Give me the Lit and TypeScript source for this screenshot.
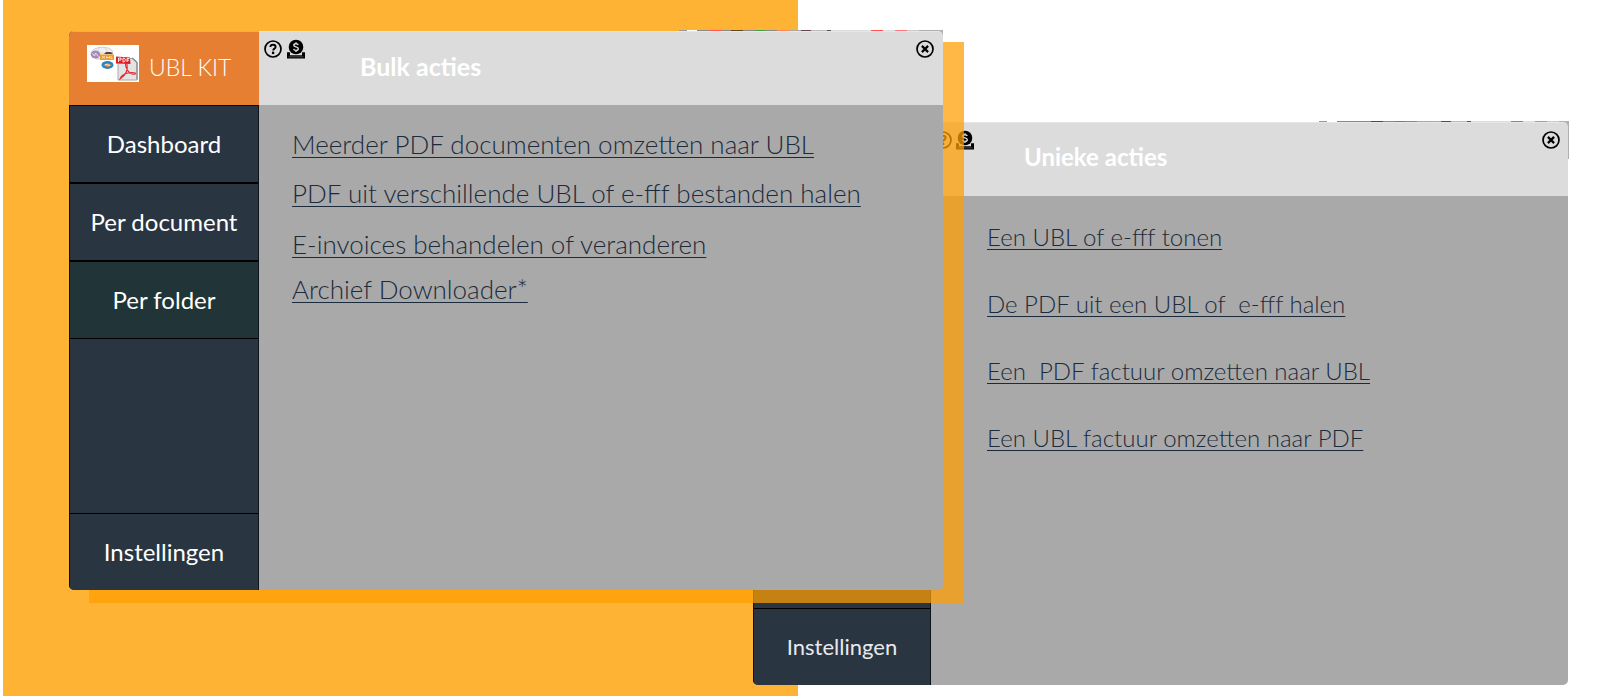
import { LitElement, html, css, svg, nothing } from 'lit';
import { customElement, property } from 'lit/decorators.js';
import { classMap } from 'lit/directives/class-map.js';

const helpIcon = svg`<svg viewBox="0 0 18 18" aria-hidden="true">
  <circle cx="9" cy="9" r="8" fill="none" stroke="#000" stroke-width="1.7" />
  <path d="M6.4 7.1C6.4 5.5 7.5 4.7 9 4.7s2.6.8 2.6 2.2c0 1.8-2.4 1.7-2.4 3.5" fill="none" stroke="#000" stroke-width="1.9" />
  <circle cx="9.1" cy="12.9" r="1.3" />
</svg>`;

const coinIcon = svg`<svg viewBox="0 0 18 18" aria-hidden="true">
  <path d="M0 12.3h3v3h12v-3h3V18.4H0z" />
  <path d="M1.6 16.8h14.8" stroke="#777" stroke-width=".6" />
  <circle cx="9" cy="7" r="7.3" />
  <path d="M11.3 4.9C10.9 4 10 3.7 9 3.7c-1.3 0-2.2.6-2.2 1.6 0 2.2 4.5 1 4.5 3.4 0 1-1 1.7-2.3 1.7-1.2 0-2.1-.5-2.4-1.500M9 2.200v1.500M9 10.400v1.600" fill="none" stroke="#dcdcdc" stroke-width="1.4" />
</svg>`;

const closeIcon = svg`<svg viewBox="0 0 18 18" aria-hidden="true">
  <circle cx="9" cy="9" r="8" fill="none" stroke="#000" stroke-width="1.7" />
  <path d="M5.9 5.9l6.2 6.2M12.1 5.9l-6.2 6.2" stroke="#000" stroke-width="2.2" />
</svg>`;

const logo = svg`<svg class="logo" viewBox="0 0 52 37" preserveAspectRatio="none" role="img" aria-label="UBL Kit">
  <rect width="52" height="37" fill="#fff" />
  <path d="M4 8c2-7 19-8 22-1l-4 7H9z" fill="#f0eff3" stroke="#c4c2cb" stroke-width=".8" />
  <path d="M9 6l13 4M12 3l-3 8M18 3l4 6" stroke="#d5d3da" stroke-width=".8" />
  <ellipse cx="8.5" cy="9.5" rx="4.8" ry="4" fill="#a58bb5" />
  <path d="M5.5 8.5l2 2.5 1-3 3 3.5" fill="none" stroke="#eee3f3" />
  <path d="M17 9l2-2h5l2 2z" fill="#5a4632" />
  <rect x="13" y="9.5" width="14" height="5.5" fill="#f39a1f" />
  <path d="M15 11l3 2.5M18 11l-3 2.5M19.5 13.5v-2l1.5 1.5 1.5-1.5v2M24 11v2.5h1.5" fill="none" stroke="#fbe6bd" stroke-width=".9" />
  <ellipse cx="20.5" cy="20" rx="6" ry="3.9" fill="#2585c9" />
  <path d="M16 20.5l4-2.5 5 2-4 2z" fill="#ef8b32" />
  <path d="M18 19.5l5 .8" stroke="#fff" stroke-width=".8" />
  <path d="M31 13.5h15l4 3.5v18H31z" fill="#e3e3e3" stroke="#aaa" />
  <path d="M45 13l5 4.5v17" fill="none" stroke="#8b8b8b" stroke-width="1.3" />
  <path d="M33 34c6-4 8-10 7-15-1-2-2 0-1 3 2 6 6 8 9 7 2-1-2-2-7-1s-7 3-8 6z" fill="none" stroke="#e02b32" stroke-width="1.1" />
  <path d="M29 11.5l14 1 .5 6.5-14.5-.5z" fill="#df1f26" />
  <path d="M31.5 17v-4h2.5v2h-2M36 13v4c3 0 3-4 0-4M40 17v-3.5h2.5M40 15.2h2" fill="none" stroke="#fff" stroke-width=".9" />
</svg>`;

@customElement('kit-window')
class KitWindow extends LitElement {
  @property() heading = '';
  @property({ attribute: false }) links: string[] = [];
  @property({ attribute: false }) items: string[] = [];
  @property() current = '';
  @property({ type: Boolean }) secondary = false;

  static styles = css`
    :host {
      display: block;
      min-width: 0;
      font-family: Lato, 'Open Sans', sans-serif;
    }
    .window {
      position: relative;
      box-sizing: border-box;
      height: 100%;
      display: grid;
      grid-template-columns: 190px minmax(0, 1fr);
      background: #a9a9a9;
      border-radius: 5px;
    }
    .secondary {
      grid-template-columns: 178px minmax(0, 1fr);
    }
    .frame {
      position: relative;
      z-index: 0;
      height: 100%;
    }
    /* busy desktop edge peeking out behind the window */
    .fringe {
      position: absolute;
      top: -1px;
      right: 0;
      width: 264px;
      height: 8px;
      z-index: -1;
      background: linear-gradient(90deg, #999 0 8px, #fff 8px 18px, #888 18px 30px, #f55 30px 42px, #888 42px 52px,
        #5f4a20 52px 64px, #888 64px 76px, #3fa34d 76px 86px, #888 86px 98px, #f85 98px 110px, #aaa 110px 122px,
        #645 122px 132px, #bbb 132px 148px, #555 148px 152px, #ddd 152px 192px, #f55 192px 204px, #ddd 204px 216px,
        #f77 216px 228px, #ccc 228px 240px, #b0b0b0 240px);
    }
    .fringe.wide {
      right: -1px;
      width: 250px;
      height: 38px;
    }
    .side {
      display: flex;
      flex-direction: column;
      overflow: hidden;
      border-radius: 5px 0 0 5px;
      background: #2a3542;
    }
    .brand {
      box-sizing: border-box;
      height: 74px;
      display: flex;
      align-items: center;
      gap: 10px;
      padding: 0 0 10px 18px;
      border-top: 1px solid #eda86f;
      background: #e67f32;
      color: #fff;
      font-size: 23px;
      line-height: 32px;
      font-weight: 300;
      white-space: nowrap;
    }
    .brand span {
      padding-top: 6px;
    }
    .logo {
      width: 52px;
      height: 37px;
    }
    nav {
      flex: 1;
      display: flex;
      flex-direction: column;
      border-left: 1px solid #0d1218;
      border-right: 1px solid #0d1218;
    }
    button {
      font-family: inherit;
      cursor: pointer;
    }
    .item {
      box-sizing: border-box;
      height: 78px;
      padding: 0;
      border: 0;
      border-top: 1px solid #000;
      border-bottom: 1px solid #000;
      background: #2a3542;
      color: #fff;
      font-size: 24px;
      line-height: 32px;
    }
    .secondary .item {
      font-size: 22px;
      color: #e8eaec;
    }
    .item.current {
      background: #213438;
    }
    .item.last {
      margin-top: auto;
      height: 77px;
      border-bottom: 0;
    }
    .main {
      display: flex;
      flex-direction: column;
      min-width: 0;
    }
    header {
      box-sizing: border-box;
      height: 74px;
      display: flex;
      align-items: flex-start;
      gap: 5px;
      padding: 8px 9px 0 5px;
      border-top: 1px solid #e6e6e6;
      border-top-right-radius: 5px;
      background: #dcdcdc;
    }
    .icon {
      width: 18px;
      height: 18px;
      padding: 0;
      border: 0;
      background: none;
    }
    .icon svg {
      display: block;
      overflow: visible;
    }
    h2 {
      flex: 1;
      margin: 10px 0 0 50px;
      color: #fff;
      font-size: 25px;
      line-height: 32px;
      font-weight: 700;
    }
    .secondary header {
      padding: 8px 8px 0 3px;
      gap: 4px;
    }
    .secondary h2 {
      margin-left: 46px;
      font-size: 24px;
    }
    ul {
      margin: 0;
      padding: 23px 24px 0 33px;
      list-style: none;
      font-size: 26px;
      line-height: 33px;
      font-weight: 300;
    }
    li + li {
      margin-top: 16px;
    }
    li:nth-child(3) {
      margin-top: 18px;
    }
    li:nth-child(4) {
      margin-top: 12px;
    }
    .secondary ul {
      padding: 24px 24px 0 56px;
      font-size: 24px;
    }
    .secondary li + li {
      margin-top: 34px;
    }
    a {
      color: #1b2b3c;
      white-space: pre-wrap;
      text-decoration-line: underline;
      text-decoration-thickness: 1px;
      text-underline-offset: 3px;
      text-decoration-skip-ink: none;
    }
  `;

  render() {
    return html`<div class="frame">
      <div class=${classMap({ fringe: true, wide: this.secondary })}></div>
      <section class=${classMap({ window: true, secondary: this.secondary })}>
        <div class="side">
          ${this.secondary ? nothing : html`<div class="brand">${logo}<span>UBL KIT</span></div>`}
          <nav>
            ${this.items.map(
              (t) => html`<button class=${classMap({ item: true, current: t === this.current })}>${t}</button>`
            )}
            <button class="item last">Instellingen</button>
          </nav>
        </div>
        <div class="main">
          <header>
            <button class="icon" aria-label="Help">${helpIcon}</button>
            <button class="icon" aria-label="Credits">${coinIcon}</button>
            <h2>${this.heading}</h2>
            <button class="icon" aria-label="Sluiten">${closeIcon}</button>
          </header>
          <ul>
            ${this.links.map((t) => html`<li><a href="#">${t}</a></li>`)}
          </ul>
        </div>
      </section>
    </div>`;
  }
}

@customElement('app-root')
class AppRoot extends LitElement {
  static styles = css`
    :host {
      display: block;
      background: #fff;
    }
    .stage {
      display: grid;
      min-height: 100vh;
      grid-template-columns:
        minmax(0, 3fr) minmax(0, 66fr) minmax(0, 20fr) minmax(0, 664fr) minmax(0, 45fr)
        minmax(0, 145fr) minmax(0, 21fr) minmax(0, 604fr) minmax(0, 32fr);
      grid-template-rows: 31fr 11fr 80fr 468fr 13fr 82fr 11fr 4fr;
    }
    .backdrop {
      grid-area: 1 / 2 / 8 / 6;
      background: #ffb335;
    }
    .back {
      grid-area: 4 / 5 / 7 / 9;
    }
    .shade {
      grid-area: 3 / 4 / 6 / 8;
      z-index: 1;
      background: rgba(255, 158, 0, 0.73);
    }
    .front {
      grid-area: 2 / 3 / 5 / 7;
      z-index: 2;
    }
  `;

  render() {
    return html`<main class="stage">
      <div class="backdrop"></div>
      <kit-window
        class="back"
        secondary
        heading="Unieke acties"
        .links=${[
          'Een UBL of e-fff tonen',
          'De PDF uit een UBL of  e-fff halen',
          'Een  PDF factuur omzetten naar UBL',
          'Een UBL factuur omzetten naar PDF',
        ]}
      ></kit-window>
      <div class="shade"></div>
      <kit-window
        class="front"
        heading="Bulk acties"
        current="Per folder"
        .items=${['Dashboard', 'Per document', 'Per folder']}
        .links=${[
          'Meerder PDF documenten omzetten naar UBL',
          'PDF uit verschillende UBL of e-fff bestanden halen',
          'E-invoices behandelen of veranderen',
          'Archief Downloader*',
        ]}
      ></kit-window>
    </main>`;
  }
}
